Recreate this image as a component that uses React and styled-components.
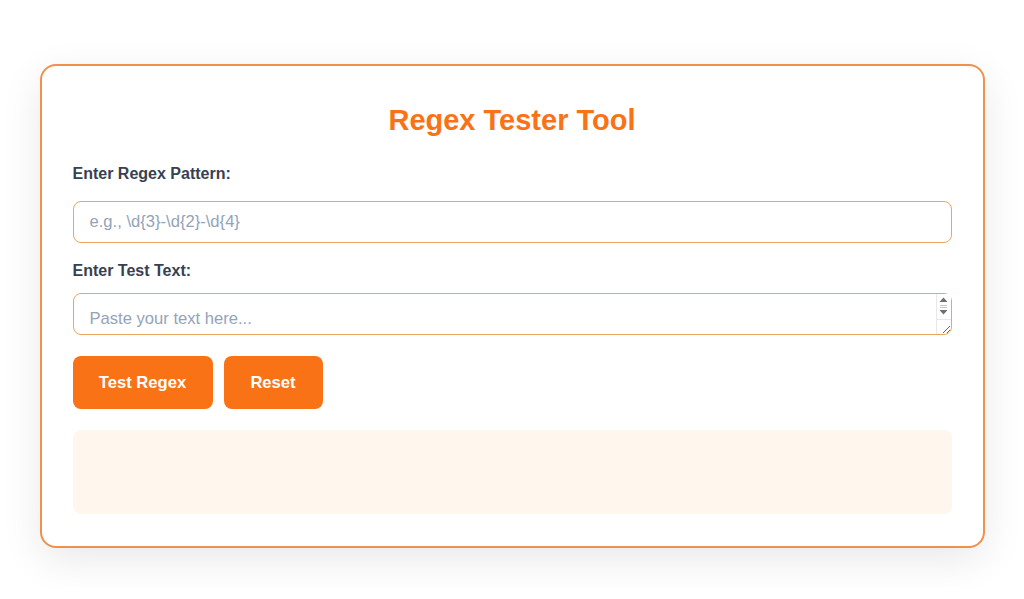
import styled, { createGlobalStyle } from "styled-components";

const GlobalStyle = createGlobalStyle`
  * { box-sizing: border-box; }
  body {
    margin: 0;
    background: #ffffff;
    font-family: "Liberation Sans", Arial, sans-serif;
  }
`;

const Page = styled.div`
  display: flex;
  justify-content: center;
  padding-top: 64px;
  padding-bottom: 40px;
`;

const Card = styled.div`
  width: 945px;
  background: #ffffff;
  border: 2px solid #f0904a;
  border-radius: 16px;
  padding: 32px 31px 32px;
  box-shadow: 0 12px 40px rgba(0, 0, 0, 0.09);
`;

const Title = styled.h1`
  margin: 5px 0 28px;
  text-align: center;
  font-size: 29px;
  line-height: 34px;
  font-weight: 700;
  color: #f97316;
`;

const Label = styled.label`
  display: block;
  font-size: 16px;
  line-height: 18px;
  font-weight: 700;
  color: #374151;
  margin-bottom: ${(p) => p.$gap}px;
`;

const Input = styled.input`
  display: block;
  width: 100%;
  height: 42px;
  padding: 0 16px;
  border: 1px solid #e8a660;
  border-radius: 8px;
  font-family: inherit;
  font-size: 16.6px;
  color: #1f2937;
  outline: none;
  margin-bottom: 19px;
  &::placeholder { color: #94a3b8; }
`;

const AreaWrap = styled.div`
  position: relative;
  margin-bottom: 21px;
`;

const TextArea = styled.textarea`
  display: block;
  width: 100%;
  height: 42px;
  padding: 16px 32px 0 16px;
  border: 1px solid #e8a660;
  border-radius: 8px;
  font-family: inherit;
  font-size: 16.6px;
  line-height: 18px;
  color: #1f2937;
  outline: none;
  overflow: hidden;
  &::placeholder { color: #94a3b8; }
`;

/* fake classic scrollbar drawn over the textarea's right edge */
const ScrollBar = styled.div`
  position: absolute;
  top: 1px;
  right: 1px;
  width: 15px;
  height: 40px;
  display: flex;
  flex-direction: column;
  border-left: 1px solid #e8e8e8;
  pointer-events: none;
`;

const Arrows = styled.div`
  height: 25px;
  background: #ffffff;
  display: flex;
  justify-content: center;
  padding-top: 3px;
`;

const Resizer = styled.div`
  flex: 1;
  border-top: 1px solid #e8e8e8;
`;

export default function App() {
  return (
    <>
      <GlobalStyle />
      <Page>
        <Card>
          <Title>Regex Tester Tool</Title>
          <Label $gap={18}>Enter Regex Pattern:</Label>
          <Input placeholder="e.g., \d{3}-\d{2}-\d{4}" />
          <Label $gap={13}>Enter Test Text:</Label>
          <AreaWrap>
            <TextArea placeholder="Paste your text here..." />
            <ScrollBar>
              <Arrows>
                <svg width="9" height="19" viewBox="0 0 9 19">
                  <path d="M4.5 0.5 L8.5 5 L0.5 5 Z" fill="#6f6f6f" />
                  <rect x="1" y="8" width="7" height="1" fill="#c8c8c8" />
                  <rect x="1" y="10" width="7" height="1" fill="#c8c8c8" />
                  <path d="M0.5 13 L8.5 13 L4.5 17.5 Z" fill="#6f6f6f" />
                </svg>
              </Arrows>
              <Resizer />
            </ScrollBar>
          </AreaWrap>
          <Actions>
            <Button $w={140}>Test Regex</Button>
            <Button $w={99}>Reset</Button>
          </Actions>
          <Result />
        </Card>
      </Page>
    </>
  );
}

const Actions = styled.div`
  display: flex;
  gap: 11px;
  margin-bottom: 21px;
`;

const Button = styled.button`
  height: 53px;
  width: ${(p) => p.$w}px;
  border: none;
  border-radius: 8px;
  background: #f97316;
  color: #ffffff;
  font-family: inherit;
  font-size: 16.6px;
  font-weight: 700;
  cursor: pointer;
`;

const Result = styled.div`
  height: 84px;
  border-radius: 8px;
  background: #fff7ed;
`;
